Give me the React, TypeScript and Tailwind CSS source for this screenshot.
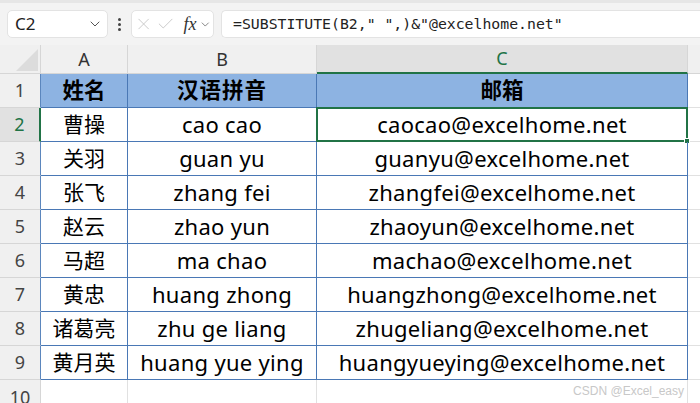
import { ChevronDown, X, Check } from "lucide-react";

const rows = [
  ["曹操", "cao cao", "caocao@excelhome.net"],
  ["关羽", "guan yu", "guanyu@excelhome.net"],
  ["张飞", "zhang fei", "zhangfei@excelhome.net"],
  ["赵云", "zhao yun", "zhaoyun@excelhome.net"],
  ["马超", "ma chao", "machao@excelhome.net"],
  ["黄忠", "huang zhong", "huangzhong@excelhome.net"],
  ["诸葛亮", "zhu ge liang", "zhugeliang@excelhome.net"],
  ["黄月英", "huang yue ying", "huangyueying@excelhome.net"],
];

const cellFont = { fontFamily: '"Noto Sans", "Noto Sans CJK SC", sans-serif' };

function ToolBar() {
  return (
    <div className="h-[45px] bg-[#f3f3f3] border-t-[3px] border-[#e6e6e6] flex items-center pl-[7px] gap-0">
      <div className="w-[101px] h-[28px] bg-white rounded-[5px] border border-[#e3e3e3] flex items-center justify-between pl-[7px] pr-[4px]">
        <span className="text-[17px] text-[#222]" style={cellFont}>C2</span>
        <ChevronDown className="w-4 h-4 text-[#555]" strokeWidth={1.5} />
      </div>
      <div className="w-[23px] flex flex-col items-center gap-[2px]">
        <span className="w-[3px] h-[3px] bg-[#444] rounded-full" />
        <span className="w-[3px] h-[3px] bg-[#444] rounded-full" />
        <span className="w-[3px] h-[3px] bg-[#444] rounded-full" />
      </div>
      <div className="w-[83px] h-[28px] bg-white rounded-[5px] border border-[#e3e3e3] flex items-center pl-[2px] pr-[2px]">
        <X className="w-[20px] h-[20px] text-[#c4c4c4]" strokeWidth={1.1} />
        <Check className="w-[20px] h-[20px] text-[#c4c4c4] ml-[3px]" strokeWidth={1.1} />
        <span className="ml-[8px] text-[18px] italic text-[#333] leading-none" style={{ fontFamily: '"Liberation Serif", serif' }}>fx</span>
        <ChevronDown className="w-[13px] h-[13px] text-[#666] ml-[2px]" strokeWidth={1.5} />
      </div>
      <div className="ml-[7px] flex-1 h-[28px] bg-white rounded-l-[5px] border border-r-0 border-[#e3e3e3] flex items-center pl-[11px]">
        <span className="text-[14.8px] text-[#222] whitespace-pre" style={{ fontFamily: '"DejaVu Sans Mono", monospace' }}>
          =SUBSTITUTE(B2," ",)&amp;"@excelhome.net"
        </span>
      </div>
    </div>
  );
}

export default function App() {
  const cols = "grid-cols-[41px_87px_189px_371px_1fr]";
  return (
    <div className="w-[700px] h-[403px] overflow-hidden bg-white">
      <ToolBar />
      <div className={`grid ${cols} grid-rows-[29px_repeat(9,34px)_30px]`} style={cellFont}>
        {/* header row */}
        <div className="bg-[#f0f0f0] border-r border-b border-[#d6d6d6] relative">
          <div className="absolute right-[2px] bottom-[2px] w-0 h-0 border-l-[22px] border-l-transparent border-b-[22px] border-b-[#dcdcdc]" />
        </div>
        <div className="bg-[#f0f0f0] border-r border-b border-[#d6d6d6] flex items-center justify-center text-[18px] text-[#333]">A</div>
        <div className="bg-[#f0f0f0] border-r border-b border-[#d6d6d6] flex items-center justify-center text-[18px] text-[#333]">B</div>
        <div className="bg-[#e1e1e1] border-r border-[#d6d6d6] border-b-2 border-b-[#217346] flex items-center justify-center text-[18px] text-[#217346]">C</div>
        <div className="bg-[#f0f0f0] border-b border-[#d6d6d6]" />

        {/* row 1 */}
        <div className="bg-[#f0f0f0] border-r border-r-[#5b86bd] border-b border-b-[#d6d6d6] flex items-center justify-center text-[18px] text-[#444]">1</div>
        <div className="bg-[#8db3e2] border-r border-b border-[#4a78b5] flex items-center justify-center text-[21.5px] font-bold text-black">姓名</div>
        <div className="bg-[#8db3e2] border-r border-b border-[#4a78b5] flex items-center justify-center text-[21.5px] font-bold text-black tracking-[1px]">汉语拼音</div>
        <div className="bg-[#8db3e2] border-r border-b border-[#4a78b5] flex items-center justify-center text-[21.5px] font-bold text-black">邮箱</div>
        <div className="border-b border-[#e1e1e1]" />

        {rows.map((r, i) => {
          const n = i + 2;
          const selected = n === 2;
          return [
            <div
              key={`h${n}`}
              className={
                selected
                  ? "bg-[#e1e1e1] border-r-2 border-r-[#217346] border-b border-b-[#d6d6d6] flex items-center justify-center text-[18px] text-[#217346]"
                  : "bg-[#f0f0f0] border-r border-r-[#5b86bd] border-b border-b-[#d6d6d6] flex items-center justify-center text-[18px] text-[#444]"
              }
            >
              {n}
            </div>,
            <div key={`a${n}`} className="border-r border-b border-[#4a78b5] flex items-center justify-center text-[21px] text-black">{r[0]}</div>,
            <div key={`b${n}`} className="border-r border-b border-[#4a78b5] flex items-center justify-center text-[22px] tracking-[0.3px] text-black">{r[1]}</div>,
            <div key={`c${n}`} className="relative border-r border-b border-[#4a78b5] flex items-center justify-center text-[22px] tracking-[0.3px] text-black">
              {r[2]}
              {selected && (
                <div className="absolute -left-[1px] -top-[1px] -right-[1px] -bottom-[1px] border-2 border-[#217346]">
                  <div className="absolute -right-[4px] -bottom-[4px] w-[6px] h-[6px] bg-[#217346] border border-white" />
                </div>
              )}
            </div>,
            <div key={`d${n}`} className="border-b border-[#e1e1e1]" />,
          ];
        })}

        {/* row 10 */}
        <div className="bg-[#f0f0f0] border-r border-[#d6d6d6] flex items-start justify-center pt-[4px] text-[18px] text-[#444]">10</div>
        <div className="border-r border-[#e1e1e1]" />
        <div className="border-r border-[#e1e1e1]" />
        <div className="border-r border-[#e1e1e1] flex items-start justify-end pr-[3px] pt-[2px]">
          <span className="text-[12px] text-[#c8c8c8]" style={{ fontFamily: '"Liberation Sans", sans-serif' }}>CSDN @Excel_easy</span>
        </div>
        <div />
      </div>
    </div>
  );
}
